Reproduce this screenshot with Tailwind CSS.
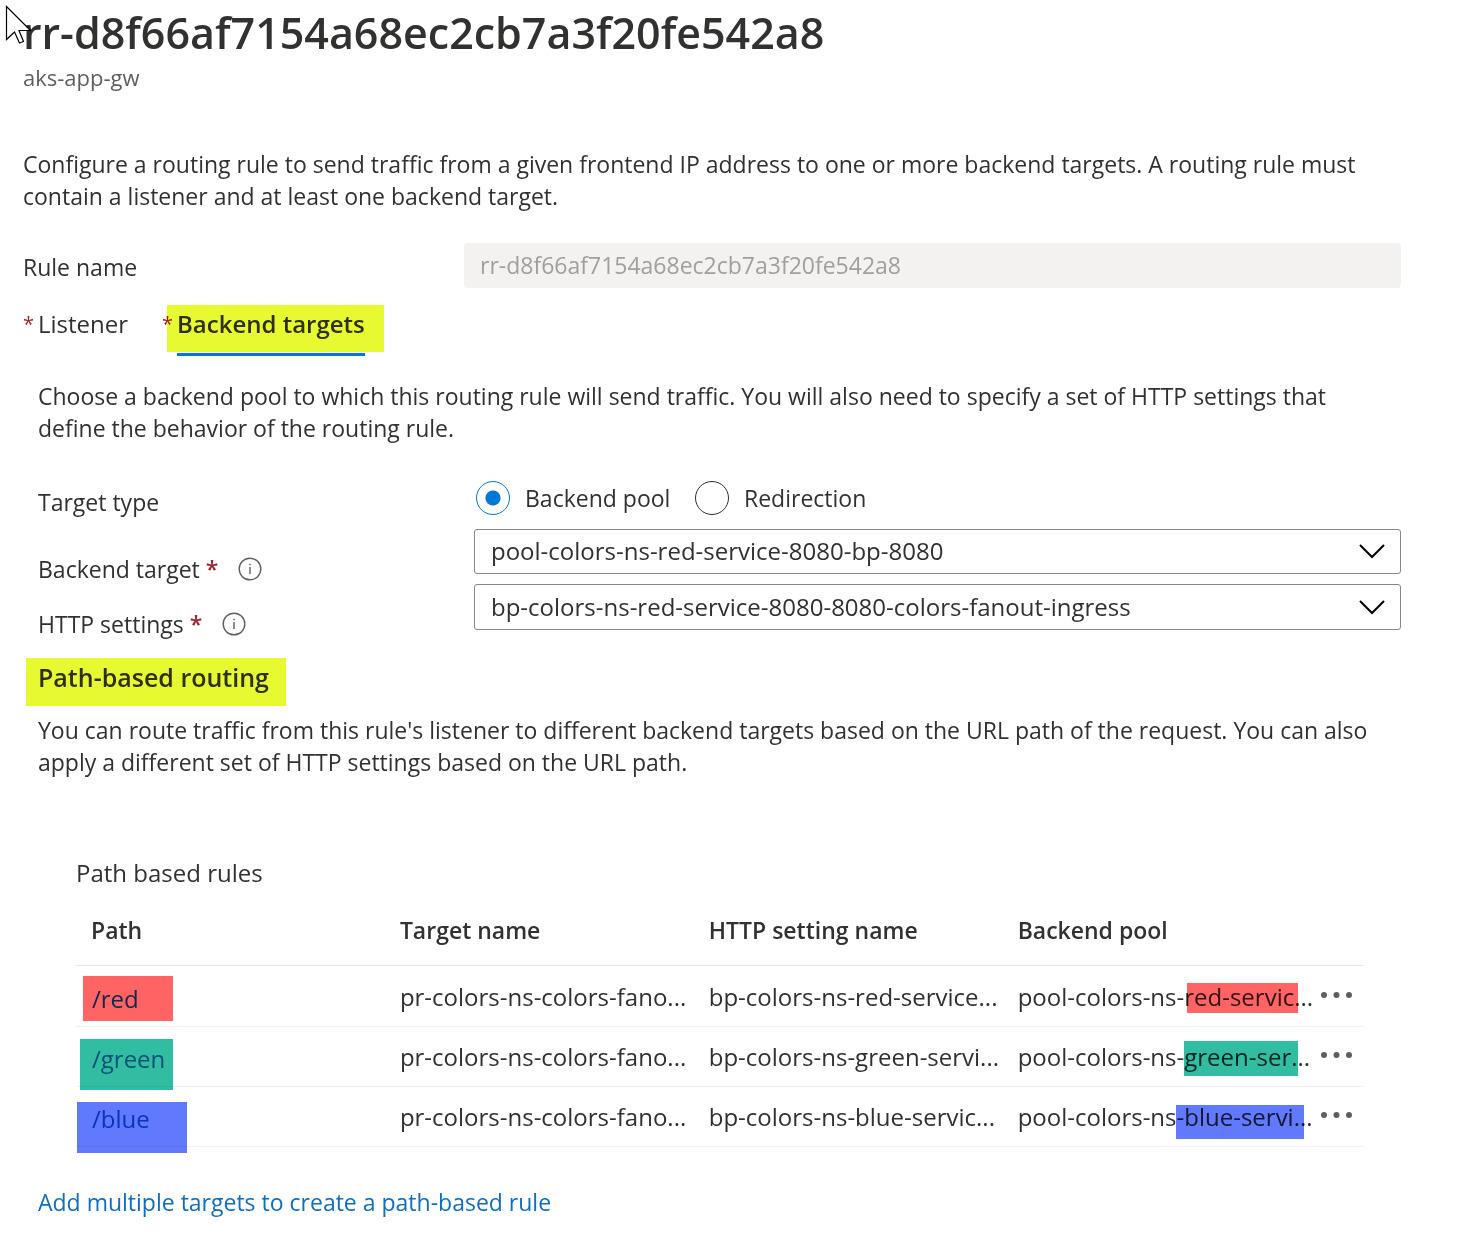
<!DOCTYPE html>
<html lang="en">
<head>
<meta charset="utf-8">
<meta name="viewport" content="width=device-width, initial-scale=1">
<title>Routing rule</title>
<script src="https://cdn.jsdelivr.net/npm/@tailwindcss/browser@4"></script>
</head>
<body class="bg-white font-['Open_Sans','Noto_Sans',sans-serif] text-[23px] leading-8 text-[#323130]">
<svg class="absolute left-[5px] top-[4px] z-10 h-[42px] w-7" viewBox="0 0 28 42" aria-hidden="true"><path d="M1.5 2.500V35.500L9.500 28L14.500 39L18.500 37.500L14 26.500H25.500Z" fill="#fff" stroke="#000" stroke-width="1.200"/></svg>
<main class="pr-[79px] pl-[23px]">
  <header class="pb-14">
    <h1 class="pt-[3px] text-[43px] leading-[60px] font-semibold">rr-d8f66af7154a68ec2cb7a3f20fe542a8</h1>
    <p class="text-[22px] leading-[29px] text-[#605e5c]">aks-app-gw</p>
  </header>

  <p>Configure a routing rule to send traffic from a given frontend IP address to one or more backend targets. A routing rule must contain a listener and at least one backend target.</p>

  <div class="mt-[31px] flex items-center">
    <label for="rule" class="w-[441px] shrink-0 pt-0.5">Rule name</label>
    <input id="rule" disabled value="rr-d8f66af7154a68ec2cb7a3f20fe542a8" class="h-[45px] min-w-0 flex-1 rounded bg-[#f3f2f1] px-4 pb-0.5 text-[#a19f9d]">
  </div>

  <nav class="mt-[17px] flex items-start text-[24px]">
    <a href="#listener" class="flex w-[144px] shrink-0 pt-[3px]"><span class="w-[15px] text-[20px] text-[#a4262c]">*</span>Listener</a>
    <a href="#targets" class="relative flex h-[51px] bg-[linear-gradient(#e6f931_47px,transparent_47px)] pt-[3px] pr-[19px] pl-[10px] font-semibold text-[#2d3009]">
      <span class="absolute -left-[5px] text-[20px] font-normal text-[#9b250a]">*</span>
      <span class="border-b-3 border-[#0078d4]">Backend targets</span>
    </a>
  </nav>

  <section id="targets" class="pl-[15px]">
    <p class="mt-6 pr-8">Choose a backend pool to which this routing rule will send traffic. You will also need to specify a set of HTTP settings that define the behavior of the routing rule.</p>

    <fieldset class="mt-[34px] flex items-center">
      <legend class="float-left w-[438px] shrink-0 pt-2">Target type</legend>
      <div class="flex items-center">
        <label class="flex w-[219px] items-center gap-[15px]"><input type="radio" name="type" checked class="size-[34px] shrink-0 appearance-none rounded-full border border-[#323130] checked:border-[#0078d4] checked:bg-[radial-gradient(circle,#0078d4_7px,transparent_8px)]">Backend pool</label>
        <label class="flex items-center gap-[15px]"><input type="radio" name="type" class="size-[34px] shrink-0 appearance-none rounded-full border border-[#323130] checked:border-[#0078d4] checked:bg-[radial-gradient(circle,#0078d4_7px,transparent_8px)]">Redirection</label>
      </div>
    </fieldset>

    <div class="mt-[11px] flex">
      <div class="flex w-[436px] shrink-0 items-center pt-6">
        <label for="pool">Backend target <span class="font-semibold text-[#a4262c]">*</span></label>
        <svg class="ml-5 size-6" viewBox="0 0 24 24" fill="none" stroke="#605e5c" aria-hidden="true"><circle cx="12" cy="12" r="10.800" stroke-width="1.400"/><path d="M12 10v7" stroke-width="1.400"/><circle cx="12" cy="7.500" r=".6" fill="#605e5c" stroke-width=".6"/></svg>
      </div>
      <div class="relative h-[45px] min-w-0 flex-1">
        <select id="pool" class="size-full appearance-none rounded-[3px] border border-[#8a8886] bg-white pr-14 pb-0.5 pl-4 text-[24px]"><option>pool-colors-ns-red-service-8080-bp-8080</option></select>
        <svg class="pointer-events-none absolute top-[14px] right-4 h-4 w-[26px]" viewBox="0 0 26 16" fill="none" stroke="#000" stroke-width="2" aria-hidden="true"><path d="M1 2L13 14L25 2"/></svg>
      </div>
    </div>

    <div class="mt-[-1px] flex">
      <div class="flex w-[436px] shrink-0 items-center pt-6">
        <label for="http">HTTP settings <span class="font-semibold text-[#a4262c]">*</span></label>
        <svg class="ml-5 size-6" viewBox="0 0 24 24" fill="none" stroke="#605e5c" aria-hidden="true"><circle cx="12" cy="12" r="10.800" stroke-width="1.400"/><path d="M12 10v7" stroke-width="1.400"/><circle cx="12" cy="7.500" r=".6" fill="#605e5c" stroke-width=".6"/></svg>
      </div>
      <div class="relative h-[46px] min-w-0 flex-1">
        <select id="http" class="size-full appearance-none rounded-[3px] border border-[#8a8886] bg-white pr-14 pl-4 text-[24px]"><option>bp-colors-ns-red-service-8080-8080-colors-fanout-ingress</option></select>
        <svg class="pointer-events-none absolute top-[15px] right-4 h-4 w-[26px]" viewBox="0 0 26 16" fill="none" stroke="#000" stroke-width="2" aria-hidden="true"><path d="M1 2L13 14L25 2"/></svg>
      </div>
    </div>

    <h2 class="mt-[18px] -ml-3 h-12 w-[260px] bg-[#e6f931] pt-[3px] pl-3 text-[25px] font-semibold text-[#2d3009]">Path-based routing</h2>
    <p class="mt-2">You can route traffic from this rule's listener to different backend targets based on the URL path of the request. You can also apply a different set of HTTP settings based on the URL path.</p>

    <div class="mt-[79px] mr-[38px] ml-[38px]">
      <h3 class="text-[24px]">Path based rules</h3>
      <table class="mt-[9px] w-full table-fixed text-left text-[24px] whitespace-nowrap">
        <thead>
          <tr class="h-[67px] border-b border-[#e6e6e6] text-[23px]">
            <th class="w-[24%] pb-[3px] pl-[15px] font-semibold">Path</th>
            <th class="w-[24%] pb-[3px] pl-[15px] font-semibold">Target name</th>
            <th class="w-[24%] pb-[3px] pl-[15px] font-semibold">HTTP setting name</th>
            <th class="w-[24%] pb-[3px] pl-[15px] font-semibold">Backend pool</th>
            <th class="w-[4%]"></th>
          </tr>
        </thead>
        <tbody>
          <tr class="h-[61px] border-b border-[#f0f0f0]">
            <td class="relative pt-1.5 pl-4"><a href="#red" class="text-[#106ebe]">/red</a><span class="absolute top-[10px] left-[7px] h-[45px] w-[90px] bg-[#ff6363] mix-blend-multiply"></span></td>
            <td class="pt-0.5 pl-[15px]">pr-colors-ns-colors-fano...</td>
            <td class="pt-0.5 pl-[15px]">bp-colors-ns-red-service...</td>
            <td class="relative pt-0.5 pl-[15px]">pool-colors-ns-red-servic...<span class="absolute top-[17px] left-[184px] h-[30px] w-[111px] bg-[#ff6363] mix-blend-multiply"></span></td>
            <td class="pl-[9px]"><button aria-label="More" class="block"><svg class="h-3 w-8" viewBox="0 0 32 12" fill="#605e5c"><circle cx="3" cy="5" r="3"/><circle cx="15.500" cy="5" r="3"/><circle cx="28" cy="5" r="3"/></svg></button></td>
          </tr>
          <tr class="h-[60px] border-b border-[#f0f0f0]">
            <td class="relative pt-1.5 pl-4"><a href="#green" class="text-[#106ebe]">/green</a><span class="absolute top-[12px] left-[4px] h-[51px] w-[93px] bg-[#31bda2] mix-blend-multiply"></span></td>
            <td class="pt-0.5 pl-[15px]">pr-colors-ns-colors-fano...</td>
            <td class="pt-0.5 pl-[15px]">bp-colors-ns-green-servi...</td>
            <td class="relative pt-0.5 pl-[15px]">pool-colors-ns-green-ser...<span class="absolute top-[14px] left-[181px] h-[35px] w-[114px] bg-[#31bda2] mix-blend-multiply"></span></td>
            <td class="pl-[9px]"><button aria-label="More" class="block"><svg class="h-3 w-8" viewBox="0 0 32 12" fill="#605e5c"><circle cx="3" cy="5" r="3"/><circle cx="15.500" cy="5" r="3"/><circle cx="28" cy="5" r="3"/></svg></button></td>
          </tr>
          <tr class="h-[60px] border-b border-[#f0f0f0]">
            <td class="relative pt-1.5 pl-4"><a href="#blue" class="text-[#106ebe]">/blue</a><span class="absolute top-[15px] left-[1px] h-[51px] w-[110px] bg-[#6179fd] mix-blend-multiply"></span></td>
            <td class="pt-0.5 pl-[15px]">pr-colors-ns-colors-fano...</td>
            <td class="pt-0.5 pl-[15px]">bp-colors-ns-blue-servic...</td>
            <td class="relative pt-0.5 pl-[15px]">pool-colors-ns-blue-servi...<span class="absolute top-[18px] left-[173px] h-[34px] w-[128px] bg-[#6179fd] mix-blend-multiply"></span></td>
            <td class="pl-[9px]"><button aria-label="More" class="block"><svg class="h-3 w-8" viewBox="0 0 32 12" fill="#605e5c"><circle cx="3" cy="5" r="3"/><circle cx="15.500" cy="5" r="3"/><circle cx="28" cy="5" r="3"/></svg></button></td>
          </tr>
        </tbody>
      </table>
    </div>

    <a href="#add" class="mt-[39px] inline-block text-[#106ebe]">Add multiple targets to create a path-based rule</a>
  </section>
</main>
</body>
</html>
